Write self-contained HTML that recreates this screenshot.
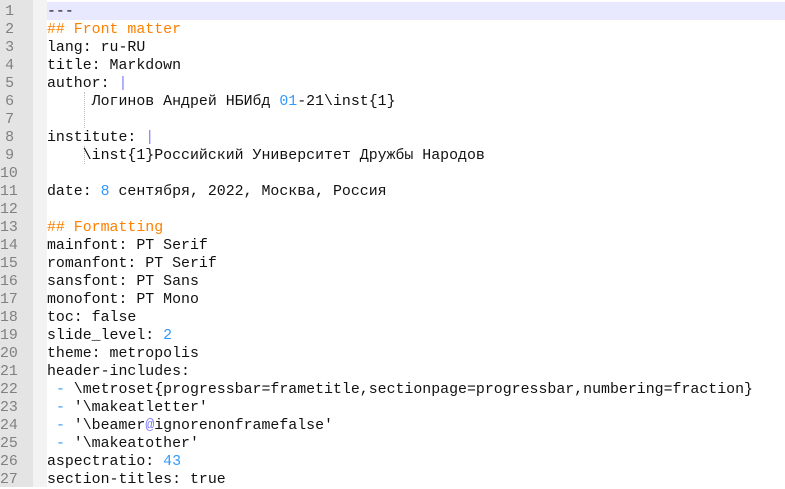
<!DOCTYPE html>
<html><head><meta charset="utf-8"><style>
html,body{margin:0;padding:0;background:#fff;width:785px;height:487px;overflow:hidden}
.g{position:absolute;left:0;top:0;width:33px;height:487px;background:#e4e4e4}
.f{position:absolute;left:33px;top:0;width:14px;height:487px;background:#f3f3f3}
.hl{position:absolute;left:47px;top:2px;width:738px;height:18px;background:#e8e8ff}
.ln{position:absolute;left:0;width:14px;text-align:right;color:#808080;font:14.9px "Liberation Mono",monospace;line-height:18px;margin-top:1px}
.t{position:absolute;left:47px;top:3px;white-space:pre;font:14.9px "Liberation Mono","DejaVu Sans Mono",monospace;line-height:18px;color:#111}
.o{color:#ff8000}.b{color:#3399ff}.p{color:#8080ff}
.guide{position:absolute;left:84px;width:0;border-left:1px dotted #bbb}
</style></head><body>
<div class="g"></div><div class="f"></div><div class="hl"></div>
<div class="guide" style="top:92px;height:36px"></div>
<div class="guide" style="top:146px;height:18px"></div>
<div class="ln" style="top:2px">1</div><div class="ln" style="top:20px">2</div><div class="ln" style="top:38px">3</div><div class="ln" style="top:56px">4</div><div class="ln" style="top:74px">5</div><div class="ln" style="top:92px">6</div><div class="ln" style="top:110px">7</div><div class="ln" style="top:128px">8</div><div class="ln" style="top:146px">9</div><div class="ln" style="top:164px">10</div><div class="ln" style="top:182px">11</div><div class="ln" style="top:200px">12</div><div class="ln" style="top:218px">13</div><div class="ln" style="top:236px">14</div><div class="ln" style="top:254px">15</div><div class="ln" style="top:272px">16</div><div class="ln" style="top:290px">17</div><div class="ln" style="top:308px">18</div><div class="ln" style="top:326px">19</div><div class="ln" style="top:344px">20</div><div class="ln" style="top:362px">21</div><div class="ln" style="top:380px">22</div><div class="ln" style="top:398px">23</div><div class="ln" style="top:416px">24</div><div class="ln" style="top:434px">25</div><div class="ln" style="top:452px">26</div><div class="ln" style="top:470px">27</div>
<div class="t">---
<span class="o">## Front matter</span>
lang: ru-RU
title: Markdown
author: <span class="p">|</span>
     Логинов Андрей НБИбд <span class="b">01</span>-21\inst{1}

institute: <span class="p">|</span>
    \inst{1}Российский Университет Дружбы Народов

date: <span class="b">8</span> сентября, 2022, Москва, Россия

<span class="o">## Formatting</span>
mainfont: PT Serif
romanfont: PT Serif
sansfont: PT Sans
monofont: PT Mono
toc: false
slide_level: <span class="b">2</span>
theme: metropolis
header-includes:
 <span class="b">-</span> \metroset{progressbar=frametitle,sectionpage=progressbar,numbering=fraction}
 <span class="b">-</span> '\makeatletter'
 <span class="b">-</span> '\beamer<span class="p">@</span>ignorenonframefalse'
 <span class="b">-</span> '\makeatother'
aspectratio: <span class="b">43</span>
section-titles: true</div>
</body></html>
